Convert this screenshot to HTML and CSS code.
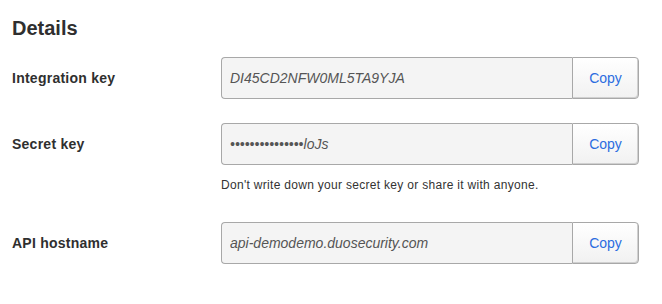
FILE: index.html
```html
<!DOCTYPE html>
<html lang="en">
<head>
<meta charset="utf-8">
<title>Details</title>
<link rel="stylesheet" href="styles.css">
</head>
<body>
<main class="details">
  <h2 class="details-title">Details</h2>

  <div class="field-row">
    <label class="field-label" for="ikey">Integration key</label>
    <div class="input-group">
      <input id="ikey" class="field-input" type="text" readonly value="DI45CD2NFW0ML5TA9YJA">
      <button class="copy-btn" type="button">Copy</button>
    </div>
  </div>

  <div class="field-row">
    <label class="field-label" for="skey">Secret key</label>
    <div class="input-group">
      <input id="skey" class="field-input" type="text" readonly value="•••••••••••••••loJs">
      <button class="copy-btn" type="button">Copy</button>
    </div>
  </div>
  <p class="field-help">Don't write down your secret key or share it with anyone.</p>

  <div class="field-row field-row-last">
    <label class="field-label" for="host">API hostname</label>
    <div class="input-group">
      <input id="host" class="field-input" type="text" readonly value="api-demodemo.duosecurity.com">
      <button class="copy-btn" type="button">Copy</button>
    </div>
  </div>
</main>
</body>
</html>
```

FILE: styles.css
```css
* {
  box-sizing: border-box;
}

html, body {
  margin: 0;
  padding: 0;
  background: #ffffff;
}

body {
  font-family: "Liberation Sans", Arial, Helvetica, sans-serif;
  color: #333333;
}

.details {
  padding: 16px 0 0 12px;
}

.details-title {
  margin: 0 0 17px 0;
  font-size: 20px;
  line-height: 24px;
  font-weight: bold;
  color: #2f2f2f;
}

.field-row {
  display: flex;
  align-items: center;
  margin-bottom: 24px;
}

.field-label {
  width: 209px;
  flex: none;
  font-size: 14px;
  font-weight: bold;
  letter-spacing: 0.25px;
  color: #2f2f2f;
}

.input-group {
  display: flex;
  width: 418px;
  height: 42px;
}

.field-input {
  flex: 1;
  min-width: 0;
  height: 42px;
  margin: 0;
  padding: 0 8px;
  border: 1px solid #a8a8a8;
  border-right: none;
  border-radius: 4px 0 0 4px;
  background: #f4f4f4;
  font-family: "Liberation Sans", Arial, Helvetica, sans-serif;
  font-size: 14px;
  font-style: italic;
  color: #555555;
  outline: none;
}

.copy-btn {
  width: 67px;
  height: 42px;
  margin: 0;
  padding: 0;
  border: 1px solid #a8a8a8;
  border-radius: 0 4px 4px 0;
  background: linear-gradient(#ffffff, #f1f1f1);
  box-shadow: inset -1px -1px 0 #d0d0d0;
  font-family: "Liberation Sans", Arial, Helvetica, sans-serif;
  font-size: 14px;
  color: #2b6de0;
  cursor: pointer;
}

.field-help {
  margin: -12px 0 29px 209px;
  font-size: 12px;
  line-height: 16px;
  letter-spacing: 0.3px;
  color: #333333;
}

.field-row-last {
  margin-bottom: 0;
}
```
